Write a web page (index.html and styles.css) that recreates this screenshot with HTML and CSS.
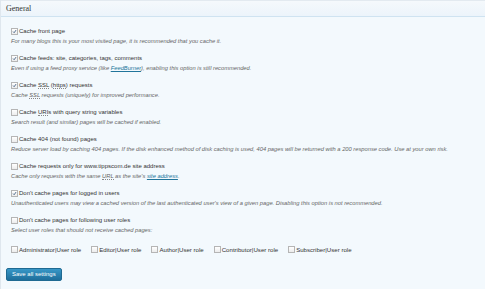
FILE: index.html
```html
<!DOCTYPE html>
<html lang="en">
<head>
  <meta charset="UTF-8" />
  <title>General</title>
  <link rel="stylesheet" href="styles.css">
</head>
<body>
  <div class="panel">
    <h3 class="panel-title">General</h3>
    <div class="panel-body">

      <div class="option">
        <label class="option-label"><span class="box checked"><svg viewBox="0 0 7 7"><path d="M1.5 3.6 L3 5.2 L5.7 1.5" /></svg></span><span>Cache front page</span></label>
        <p class="desc">For many blogs this is your most visited page, it is recommended that you cache it.</p>
      </div>

      <div class="option">
        <label class="option-label"><span class="box checked"><svg viewBox="0 0 7 7"><path d="M1.5 3.6 L3 5.2 L5.7 1.5" /></svg></span><span>Cache feeds: site, categories, tags, comments</span></label>
        <p class="desc">Even if using a feed proxy service (like <a href="#">FeedBurner</a>), enabling this option is still recommended.</p>
      </div>

      <div class="option">
        <label class="option-label"><span class="box checked"><svg viewBox="0 0 7 7"><path d="M1.5 3.6 L3 5.2 L5.7 1.5" /></svg></span><span>Cache <abbr>SSL</abbr> (<abbr>https</abbr>) requests</span></label>
        <p class="desc">Cache <abbr>SSL</abbr> requests (uniquely) for improved performance.</p>
      </div>

      <div class="option">
        <label class="option-label"><span class="box"></span><span>Cache <abbr>URI</abbr>s with query string variables</span></label>
        <p class="desc">Search result (and similar) pages will be cached if enabled.</p>
      </div>

      <div class="option">
        <label class="option-label"><span class="box"></span><span>Cache 404 (not found) pages</span></label>
        <p class="desc">Reduce server load by caching 404 pages. If the disk enhanced method of disk caching is used, 404 pages will be returned with a 200 response code. Use at your own risk.</p>
      </div>

      <div class="option">
        <label class="option-label"><span class="box"></span><span>Cache requests only for www.tippscom.de site address</span></label>
        <p class="desc">Cache only requests with the same <abbr>URL</abbr> as the site's <a href="#">site address</a>.</p>
      </div>

      <div class="option">
        <label class="option-label"><span class="box checked"><svg viewBox="0 0 7 7"><path d="M1.5 3.6 L3 5.2 L5.7 1.5" /></svg></span><span>Don't cache pages for logged in users</span></label>
        <p class="desc">Unauthenticated users may view a cached version of the last authenticated user's view of a given page. Disabling this option is not recommended.</p>
      </div>

      <div class="option">
        <label class="option-label"><span class="box"></span><span>Don't cache pages for following user roles</span></label>
        <p class="desc">Select user roles that should not receive cached pages:</p>
      </div>

      <div class="roles">
        <label class="role"><span class="box"></span><span>Administrator|User role</span></label>
        <label class="role"><span class="box"></span><span>Editor|User role</span></label>
        <label class="role"><span class="box"></span><span>Author|User role</span></label>
        <label class="role"><span class="box"></span><span>Contributor|User role</span></label>
        <label class="role"><span class="box"></span><span>Subscriber|User role</span></label>
      </div>
    </div>

    <button class="save">Save all settings</button>
  </div>
</body>
</html>
```

FILE: styles.css
```css
html, body {
  margin: 0;
  padding: 0;
  width: 100%;
  height: 100%;
  overflow: hidden;
  background-color: #f3f9fd;
}

body {
  font-family: "Liberation Sans", Arial, sans-serif;
  color: #333;
}

.panel {
  height: 100%;
  box-sizing: border-box;
  border-left: 1px solid #dfe7ee;
}

.panel-title {
  margin: 0;
  height: 15px;
  padding-left: 5px;
  border-top: 1px solid #e3eaf0;
  border-bottom: 1px solid #cfe3f1;
  background: linear-gradient(#f5f9fc, #ecf4fb);
  font-family: "Liberation Serif", "Times New Roman", serif;
  font-weight: normal;
  font-size: 8px;
  line-height: 15px;
  color: #333;
}

.panel-body {
  padding: 9px 0 0 10px;
}

.option {
  margin-bottom: 7px;
}

.option-label {
  display: flex;
  align-items: center;
  height: 10px;
  font-size: 6px;
  color: #333;
}

.desc {
  margin: 0;
  height: 10px;
  line-height: 10px;
  font-size: 5.75px;
  font-style: italic;
  color: #666;
  white-space: nowrap;
}

.desc a {
  color: #21759b;
}

abbr {
  text-decoration: none;
  border-bottom: 1px dotted #888;
}

.box {
  display: inline-flex;
  align-items: center;
  justify-content: center;
  box-sizing: border-box;
  width: 7px;
  height: 7px;
  margin-right: 1px;
  border: 1px solid #b5b5b5;
  background: linear-gradient(#fff, #ececec);
  flex-shrink: 0;
}

.box svg {
  width: 7px;
  height: 7px;
}

.box svg path {
  fill: none;
  stroke: #3c5a80;
  stroke-width: 1.2;
}

.roles {
  display: flex;
  gap: 10px;
  height: 10px;
  margin-top: 9px;
}

.role {
  display: flex;
  align-items: center;
  font-size: 6.1px;
  color: #333;
}

.save {
  display: block;
  margin: 14px 0 0 5px;
  height: 13px;
  padding: 0 5px;
  border: 1px solid #1f6a92;
  border-radius: 2px;
  background: linear-gradient(#3897c7, #1e6e9b);
  color: #fff;
  font-family: "Liberation Sans", Arial, sans-serif;
  font-size: 6px;
  line-height: 11px;
}
```
